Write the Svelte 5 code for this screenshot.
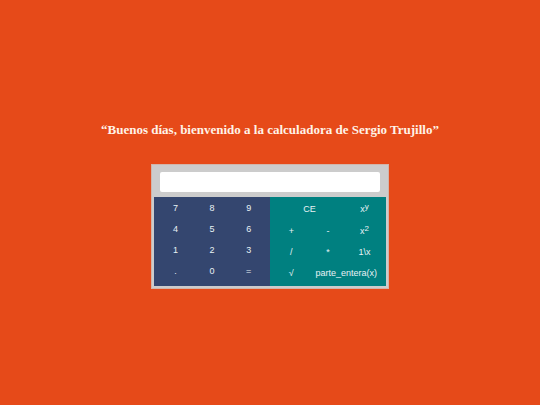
<main>
	<h1>“Buenos días, bienvenido a la calculadora de Sergio Trujillo”</h1>

	<div class="calculator">
		<div class="screen">
			<input type="text" aria-label="Pantalla" bind:value={display} />
		</div>
		<div class="keys">
			<div class="panel numbers">
				{#each numbers as key}
					<button type="button" on:click={() => press(key)}>{key}</button>
				{/each}
			</div>
			<div class="panel operations">
				{#each operations as op}
					<button type="button" class:wide={op.wide} on:click={() => press(op.name)}>
						{op.label}{#if op.sup}<sup>{op.sup}</sup>{/if}
					</button>
				{/each}
			</div>
		</div>
	</div>
</main>

<style>
	:global(body) {
		margin: 0;
		background-color: #e64a19;
	}
	main {
		display: flex;
		flex-flow: column;
		align-items: center;
		justify-content: center;
		box-sizing: border-box;
		min-height: 100vh;
		padding-top: 6px;
	}
	h1 {
		margin: 0 0 26px;
		color: #fff3e8;
		font-family: "Liberation Serif", "Times New Roman", serif;
		font-size: 13px;
		line-height: 16px;
		text-align: center;
	}
	.calculator {
		box-sizing: border-box;
		width: 44%;
		min-width: 236px;
		padding: 2px;
		border: 1px solid #d2b5aa;
		background-color: #ccc;
	}
	.screen {
		display: flex;
		padding: 5px 6px;
	}
	input {
		box-sizing: border-box;
		width: 100%;
		height: 20px;
		padding: 0 6px;
		border: 0;
		border-radius: 2px;
		background-color: #fff;
		font: 12px "Liberation Sans", Arial, sans-serif;
		text-align: right;
	}
	.keys {
		display: grid;
		grid-template-columns: 1fr 1fr;
	}
	.panel {
		display: grid;
		grid-template-columns: repeat(3, 1fr);
		grid-auto-rows: 21px;
	}
	.numbers {
		padding: 0 3px 5px;
		background-color: #34466f;
	}
	.operations {
		grid-template-rows: 22px;
		padding: 1px 3px 3px;
		background-color: #008080;
	}
	button {
		min-width: 0;
		padding: 0;
		border: 0;
		background: none;
		color: #e8f2f5;
		font: 9px "Liberation Sans", Arial, sans-serif;
		cursor: pointer;
	}
	button:hover {
		background-color: #ffffff22;
	}
	.wide {
		grid-column: span 2;
	}
	sup {
		font-size: 8px;
		line-height: 0;
		vertical-align: 3px;
	}
</style>

<script>
	let display = '';
	let first = null;
	let pending = null;

	const numbers = ['7', '8', '9', '4', '5', '6', '1', '2', '3', '.', '0', '='];
	const operations = [
		{name: 'clear', label: 'CE', wide: true},
		{name: 'pow', label: 'x', sup: 'y'},
		{name: '+', label: '+'},
		{name: '-', label: '-'},
		{name: 'square', label: 'x', sup: '2'},
		{name: '/', label: '/'},
		{name: '*', label: '*'},
		{name: 'inverse', label: '1\\x'},
		{name: 'root', label: '√'},
		{name: 'integer', label: 'parte_entera(x)', wide: true},
	];

	const binary = {
		'+': (a, b) => a + b,
		'-': (a, b) => a - b,
		'*': (a, b) => a * b,
		'/': (a, b) => a / b,
		'pow': (a, b) => Math.pow(a, b),
	};
	const unary = {
		'square': (a) => a * a,
		'inverse': (a) => 1 / a,
		'root': (a) => Math.sqrt(a),
		'integer': (a) => Math.trunc(a),
	};

	function press(key)
	{
		if (key == 'clear') {
			display = '';
			first = null;
			pending = null;
		} else if (key == '=') {
			if (pending) {
				display = String(binary[pending](first, Number(display)));
				pending = null;
			}
		} else if (binary[key]) {
			first = Number(display);
			pending = key;
			display = '';
		} else if (unary[key]) {
			display = String(unary[key](Number(display)));
		} else {
			display += key;
		}
	}
</script>
